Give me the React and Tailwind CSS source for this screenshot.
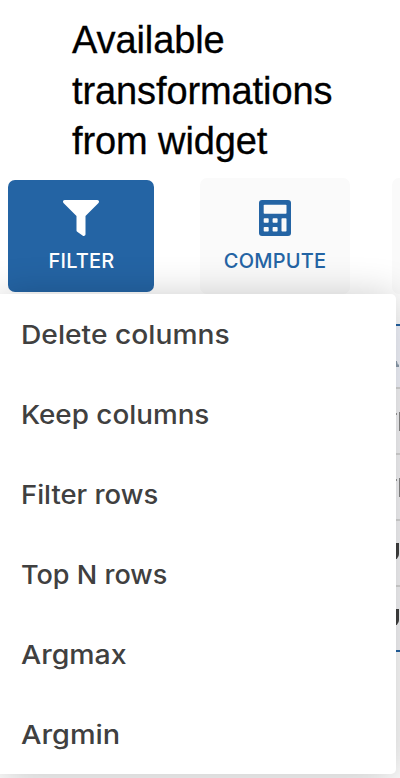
import { FaFilter } from "react-icons/fa";

const items = [
  { label: "Delete columns", style: "scale-x-[1.085]" },
  { label: "Keep columns", style: "scale-x-[1.07]" },
  { label: "Filter rows", style: "scale-x-[1.055]" },
  { label: "Top N rows", style: "scale-x-[1.04]" },
  { label: "Argmax", style: "scale-x-[1.095]" },
  { label: "Argmin", style: "scale-x-[1.11]" },
];

function CalculatorIcon() {
  return (
    <svg width="32" height="36" viewBox="0 0 32 36" className="mr-px">
      <rect width="32" height="36" rx="3" fill="#2464a4" />
      <g fill="#fafafa">
        <rect x="4.7" y="4.7" width="22.8" height="9" rx="0.8" />
        <rect x="4.7" y="18.2" width="5" height="4.6" rx="0.8" />
        <rect x="13.6" y="18.2" width="5" height="4.6" rx="0.8" />
        <rect x="4.7" y="27" width="5" height="4.6" rx="0.8" />
        <rect x="13.6" y="27" width="5" height="4.6" rx="0.8" />
        <rect x="22.5" y="18.2" width="5" height="13.4" rx="0.8" />
      </g>
    </svg>
  );
}

function Toolbar() {
  return (
    <div className="flex h-[116px] w-[560px] items-center pl-2 text-[20px] font-medium">
      <button className="flex h-[112px] w-[146px] shrink-0 flex-col items-center rounded-[7px] bg-[#2464a4] pt-[20px] text-white">
        <FaFilter size={36} />
        <span className="mt-[13px] pl-px leading-6 tracking-[0.2px]">FILTER</span>
      </button>
      <button className="ml-[46px] flex h-[116px] w-[150px] shrink-0 flex-col items-center rounded-[7px] bg-[#fafafa] pt-[22px] text-[#2464a4]">
        <CalculatorIcon />
        <span className="mt-[13px] leading-6 tracking-[0.2px]">COMPUTE</span>
      </button>
      <div className="ml-[42px] h-[116px] w-[150px] shrink-0 rounded-[7px] bg-[#fafafa]" />
    </div>
  );
}

function Table() {
  return (
    <div className="mt-[30px] ml-[384px] w-[80px] border-y-2 border-[#2464a4] text-[22px] text-[#404040]">
      <div className="flex h-[61px] items-end bg-[#f5f8ff] pl-[12px]">
        <span className="mb-[20px] h-[6px] w-[3px] bg-[#8f9fb0] [clip-path:polygon(0_0,30%_0,60%_60%,100%_60%,100%_100%,0_100%)]" />
      </div>
      {["T", "T", "J", "J"].map((letter, i) => (
        <div
          key={i}
          className="flex h-[66px] items-start border-t-2 border-[#d8d8d8] bg-[#f8f8fa] last:h-[65px]"
        >
          {letter === "T" ? (
            <>
              <div className="mt-[24px] ml-[12px] h-[2px] w-px bg-[#999]" />
              <div className="mt-[23px] ml-[2px] h-[19px] w-[2px] bg-[#888]" />
            </>
          ) : (
            <div className="mt-[22px] ml-[9px] h-[17px] w-[6px] rounded-br-[6px] bg-[#404040]" />
          )}
        </div>
      ))}
    </div>
  );
}

function Menu() {
  return (
    <ul className="absolute top-[294px] left-0 h-[480px] w-[396px] rounded-r-[5px] bg-white shadow-[0_4px_40px_rgba(0,0,0,0.24)]">
      {items.map(({ label, style }) => (
        <li key={label} className="flex h-[80px] items-center pt-px pl-[21px] text-[26px] font-medium text-[#404040]">
          <span className={`origin-left ${style}`}>{label}</span>
        </li>
      ))}
    </ul>
  );
}

export default function App() {
  return (
    <main className="relative h-[778px] w-[400px] overflow-hidden bg-white font-['Inter',sans-serif]">
      <h1 className="h-[178px] pt-[15px] pl-[72px] font-['Liberation_Sans',sans-serif] text-[38px] leading-[50.5px] tracking-[-0.1px] text-black [-webkit-text-stroke:0.3px_black]">
        Available
        <br />
        transformations
        <br />
        from widget
      </h1>
      <Toolbar />
      <Table />
      <Menu />
    </main>
  );
}
